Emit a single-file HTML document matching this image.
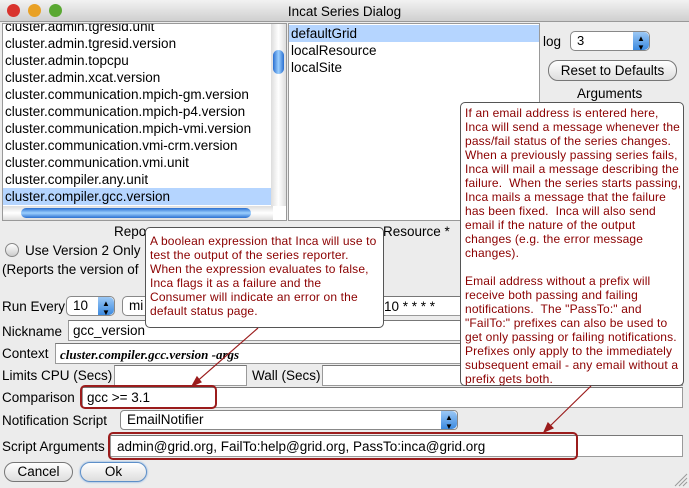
<!DOCTYPE html><html><head><style>
*{box-sizing:border-box}
body{margin:0;width:689px;height:488px;overflow:hidden;background:#ececec;font-family:"Liberation Sans",sans-serif;font-size:13px;color:#000;position:relative}
.a{position:absolute;white-space:nowrap}
.f{position:absolute;background:#fff;border:1px solid #9a9a9a;border-top-color:#777}
.tip{position:absolute;background:#fff;border:1px solid #555;border-radius:5px;color:#8b0000;font-size:12px;line-height:14px;padding:3px 4px;white-space:nowrap;letter-spacing:0.15px;overflow:hidden}
.btn{position:absolute;border:1px solid #777;border-radius:10px;background:linear-gradient(#fff,#ddd);text-align:center;font-size:13.5px}
.sel{position:absolute;border:1px solid #888;border-radius:5px;background:#fff}
.sb{position:absolute;right:0;top:0;bottom:0;width:16px;border-radius:0 5px 5px 0;background:linear-gradient(#9cc8f5,#3c8ae0);font-size:8px;color:#000;text-align:center;line-height:9px;padding-top:2px}
.red{position:absolute;border:2px solid #9b1c1c;border-radius:5px}
.l{font-size:13.5px}
</style></head><body>
<div class="a" style="left:0;top:0;width:689px;height:22px;background:linear-gradient(#f2f2f2,#cfcfcf);border-bottom:1px solid #999"></div>
<div class="a" style="left:7px;top:4px;width:13px;height:13px;border-radius:50%;background:#d9332e"></div>
<div class="a" style="left:28px;top:4px;width:13px;height:13px;border-radius:50%;background:#e9a125"></div>
<div class="a" style="left:49px;top:4px;width:13px;height:13px;border-radius:50%;background:#5aa832"></div>
<div class="a" style="left:0;width:689px;top:4px;text-align:center;font-size:13.5px">Incat Series Dialog</div>
<div class="a" style="left:2px;top:23px;width:285px;height:198px;background:#fff;border:1px solid #999;overflow:hidden">
<div style="position:relative;top:-6px;line-height:17px;padding-left:2px;font-size:13.5px">
<div>cluster.admin.tgresid.unit</div><div>cluster.admin.tgresid.version</div><div>cluster.admin.topcpu</div><div>cluster.admin.xcat.version</div><div>cluster.communication.mpich-gm.version</div><div>cluster.communication.mpich-p4.version</div><div>cluster.communication.mpich-vmi.version</div><div>cluster.communication.vmi-crm.version</div><div>cluster.communication.vmi.unit</div><div>cluster.compiler.any.unit</div><div style="background:#b5d5ff;margin-left:-2px;padding-left:2px;margin-right:14px">cluster.compiler.gcc.version</div></div>
<div class="a" style="right:0;top:0;width:15px;height:182px;background:linear-gradient(90deg,#ddd,#fff,#ddd)"></div>
<div class="a" style="right:2px;top:26px;width:11px;height:24px;border-radius:6px;background:linear-gradient(90deg,#2a6fd0,#9cd0ff,#2a6fd0)"></div>
<div class="a" style="left:0;top:182px;width:270px;height:14px;background:linear-gradient(#ddd,#fff,#ddd)"></div>
<div class="a" style="left:18px;top:184px;width:230px;height:10px;border-radius:6px;background:linear-gradient(#2a6fd0,#9cd0ff,#2a6fd0)"></div>
</div>
<div class="a" style="left:288px;top:23px;width:252px;height:198px;background:#fff;border:1px solid #999;line-height:17px;font-size:13.5px">
<div style="background:#b5d5ff;padding-left:2px;margin-top:1px">defaultGrid</div><div style="padding-left:2px">localResource</div><div style="padding-left:2px">localSite</div></div>
<div class="a l" style="left:543px;top:34px">log</div>
<div class="sel" style="left:570px;top:31px;width:80px;height:20px"><span style="margin-left:6px;line-height:18px">3</span><div class="sb">▲<br>▼</div></div>
<div class="btn" style="left:548px;top:60px;width:129px;height:21px;line-height:19px">Reset to Defaults</div>
<div class="a l" style="left:577px;top:86px">Arguments</div>
<div class="a l" style="left:114px;top:224px">Repo</div>
<div class="a l" style="left:383px;top:224px">Resource *</div>
<div class="a" style="left:5px;top:243px;width:14px;height:14px;border-radius:50%;border:1px solid #888;background:linear-gradient(#fff,#ccc)"></div>
<div class="a l" style="left:25px;top:243px">Use Version 2 Only</div>
<div class="a l" style="left:2px;top:262px">(Reports the version of</div>
<div class="a l" style="left:2px;top:299px">Run Every</div>
<div class="sel" style="left:66px;top:296px;width:49px;height:20px"><span class="l" style="margin-left:6px;line-height:18px">10</span><div class="sb">▲<br>▼</div></div>
<div class="sel" style="left:122px;top:296px;width:40px;height:20px"><span class="l" style="margin-left:6px;line-height:18px">mi</span></div>
<div class="f l" style="left:380px;top:296px;width:303px;height:20px;padding:2px 3px">10 * * * *</div>
<div class="a l" style="left:2px;top:324px">Nickname</div>
<div class="f l" style="left:68px;top:320px;width:615px;height:21px;padding:2px 4px">gcc_version</div>
<div class="a l" style="left:2px;top:346px">Context</div>
<div class="f" style="left:55px;top:343px;width:628px;height:21px;padding:3px 4px;font-family:'Liberation Serif',serif;font-style:italic;font-weight:bold;font-size:13px">cluster.compiler.gcc.version -args</div>
<div class="a l" style="left:2px;top:368px">Limits CPU (Secs)</div>
<div class="f" style="left:114px;top:365px;width:133px;height:21px"></div>
<div class="a l" style="left:252px;top:368px">Wall (Secs)</div>
<div class="f" style="left:322px;top:365px;width:361px;height:21px"></div>
<div class="a l" style="left:2px;top:390px">Comparison</div>
<div class="f l" style="left:82px;top:387px;width:601px;height:21px;padding:2px 4px">gcc &gt;= 3.1</div>
<div class="red" style="left:80px;top:385px;width:137px;height:24px"></div>
<div class="a l" style="left:2px;top:413px">Notification Script</div>
<div class="sel" style="left:120px;top:410px;width:338px;height:20px;border-radius:4px"><span class="l" style="margin-left:6px;line-height:18px">EmailNotifier</span><div class="sb">▲<br>▼</div></div>
<div class="a l" style="left:2px;top:439px">Script Arguments</div>
<div class="f l" style="left:110px;top:435px;width:573px;height:22px;padding:3px 6px">admin@grid.org, FailTo:help@grid.org, PassTo:inca@grid.org</div>
<div class="red" style="left:108px;top:432px;width:470px;height:28px"></div>
<div class="btn" style="left:4px;top:462px;width:69px;height:20px;line-height:18px">Cancel</div>
<div class="btn" style="left:80px;top:462px;width:67px;height:20px;line-height:18px;border-color:#5d8fc8;box-shadow:0 0 2px #6aa0e0">Ok</div>
<div class="tip" style="left:145px;top:227px;width:239px;height:101px;padding-top:6px">A boolean expression that Inca will use to<br>test the output of the series reporter.<br>When the expression evaluates to false,<br>Inca flags it as a failure and the<br>Consumer will indicate an error on the<br>default status page.</div>
<div class="tip" style="left:460px;top:102px;width:224px;height:284px">If an email address is entered here,<br>Inca will send a message whenever the<br>pass/fail status of the series changes.<br>When a previously passing series fails,<br>Inca will mail a message describing the<br>failure.&nbsp; When the series starts passing,<br>Inca mails a message that the failure<br>has been fixed.&nbsp; Inca will also send<br>email if the nature of the output<br>changes (e.g. the error message<br>changes).<br><br>Email address without a prefix will<br>receive both passing and failing<br>notifications.&nbsp; The "PassTo:" and<br>"FailTo:" prefixes can also be used to<br>get only passing or failing notifications.<br>Prefixes only apply to the immediately<br>subsequent email - any email without a<br>prefix gets both.</div>
<svg class="a" style="left:0;top:0" width="689" height="488"><g stroke="#9b1c1c" fill="#9b1c1c" stroke-width="1.2">
<line x1="258" y1="328" x2="194" y2="384"/><polygon points="192,386 197,377 201,382"/>
<line x1="591" y1="386" x2="546" y2="430"/><polygon points="544,432 548,423 553,428"/></g>
<g stroke="#999"><line x1="675" y1="486" x2="687" y2="474"/><line x1="679" y1="486" x2="687" y2="478"/><line x1="683" y1="486" x2="687" y2="482"/></g></svg>
</body></html>
